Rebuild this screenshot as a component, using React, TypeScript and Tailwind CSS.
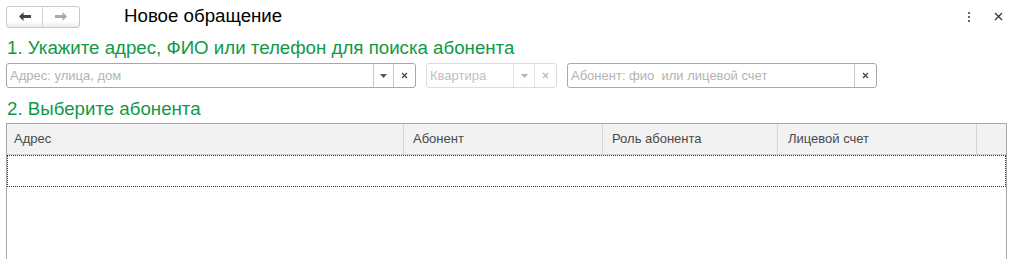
import { useState } from "react";

const font = { fontFamily: '"Liberation Sans", Arial, sans-serif' };

function Caret({ light }: { light?: boolean }) {
  return (
    <svg width="7" height="4" viewBox="0 0 7 4">
      <path d="M0 0h7L3.5 4z" fill={light ? "#b5b5b5" : "#555"} />
    </svg>
  );
}

function Cross({ light }: { light?: boolean }) {
  return (
    <svg width="7" height="7" viewBox="0 0 7 7">
      <path d="M1 1l5 5M6 1L1 6" stroke={light ? "#b5b5b5" : "#444"} strokeWidth="1.2" />
    </svg>
  );
}

export default function App() {
  const [addr, setAddr] = useState("");
  const [subscriber, setSubscriber] = useState("");

  return (
    <div className="h-[259px] w-[1020px] overflow-hidden bg-white" style={font}>
      {/* top bar */}
      <div className="flex h-[33px] items-center pl-[6px] pr-[17px]">
        <div className="flex h-[22px] w-[74px] overflow-hidden rounded-[3px] border border-[#c8c8c8] bg-gradient-to-b from-white from-70% to-[#ececec]">
          <button className="flex w-[36px] items-center justify-center border-r border-[#d4d4d4]">
            <svg width="12" height="9" viewBox="0 0 12 9">
              <path d="M0 4.5L4.5 0v3H12v3H4.5v3z" fill="#444" />
            </svg>
          </button>
          <button className="flex flex-1 items-center justify-center">
            <svg width="12" height="9" viewBox="0 0 12 9">
              <path d="M12 4.5L7.5 0v3H0v3h7.5v3z" fill="#aaa" />
            </svg>
          </button>
        </div>
        <div className="ml-[44px] text-[18.7px] leading-none text-black">Новое обращение</div>
        <div className="ml-auto flex items-center gap-[24px]">
          <div className="flex flex-col gap-[2px]">
            <span className="h-[2px] w-[2px] bg-[#666]" />
            <span className="h-[2px] w-[2px] bg-[#666]" />
            <span className="h-[2px] w-[2px] bg-[#666]" />
          </div>
          <svg width="9" height="9" viewBox="0 0 9 9">
            <path d="M1 1l7 7M8 1L1 8" stroke="#333" strokeWidth="1.2" />
          </svg>
        </div>
      </div>

      <div className="px-[6px]">
        <div className="pl-[1px] text-[18.7px] leading-[30px] text-[#0f9946]">
          1. Укажите адрес, ФИО или телефон для поиска абонента
        </div>

        {/* search fields */}
        <div className="flex h-[25px] gap-[10px]">
          <div className="flex w-[410px] overflow-hidden rounded-[3px] border border-[#a8a8a8]">
            <input
              value={addr}
              onChange={(e) => setAddr(e.target.value)}
              placeholder="Адрес: улица, дом"
              className="min-w-0 flex-1 px-[3px] text-[13px] text-[#333] outline-none placeholder:text-[#b3b3b3]"
              style={font}
            />
            <button className="flex w-[20px] items-center justify-center border-l border-[#c8c8c8]">
              <Caret />
            </button>
            <button className="flex w-[22px] items-center justify-center border-l border-[#c8c8c8]">
              <Cross />
            </button>
          </div>

          <div className="flex w-[131px] overflow-hidden rounded-[3px] border border-[#dcdcdc]">
            <div className="flex flex-1 items-center px-[3px] text-[13px] text-[#c0c0c0]">Квартира</div>
            <div className="flex w-[21px] items-center justify-center border-l border-[#e2e2e2]">
              <Caret light />
            </div>
            <div className="flex w-[22px] items-center justify-center border-l border-[#e2e2e2]">
              <Cross light />
            </div>
          </div>

          <div className="flex w-[310px] overflow-hidden rounded-[3px] border border-[#a8a8a8]">
            <input
              value={subscriber}
              onChange={(e) => setSubscriber(e.target.value)}
              placeholder="Абонент: фио  или лицевой счет"
              className="min-w-0 flex-1 px-[3px] text-[13px] text-[#333] outline-none placeholder:text-[#b3b3b3]"
              style={font}
            />
            <button className="flex w-[22px] items-center justify-center border-l border-[#c8c8c8]">
              <Cross />
            </button>
          </div>
        </div>

        <div className="mt-[6px] pl-[1px] text-[18.7px] leading-[29px] text-[#0f9946]">2. Выберите абонента</div>

        {/* table */}
        <div className="h-[200px] w-[1001px] border border-[#a8a8a8]">
          <div className="flex h-[31px] border-b border-[#d0d0d0] bg-[#f2f2f2] text-[13px] text-[#4a4a4a]">
            <div className="flex w-[397px] items-center border-r border-[#d6d6d6] pl-[7px]">Адрес</div>
            <div className="flex w-[199px] items-center border-r border-[#d6d6d6] pl-[9px]">Абонент</div>
            <div className="flex w-[175px] items-center border-r border-[#d6d6d6] pl-[9px]">Роль абонента</div>
            <div className="flex w-[199px] items-center border-r border-[#d6d6d6] pl-[10px]">Лицевой счет</div>
            <div className="flex-1" />
          </div>
          <div className="h-[32px] border border-dotted border-[#333]" />
        </div>
      </div>
    </div>
  );
}
